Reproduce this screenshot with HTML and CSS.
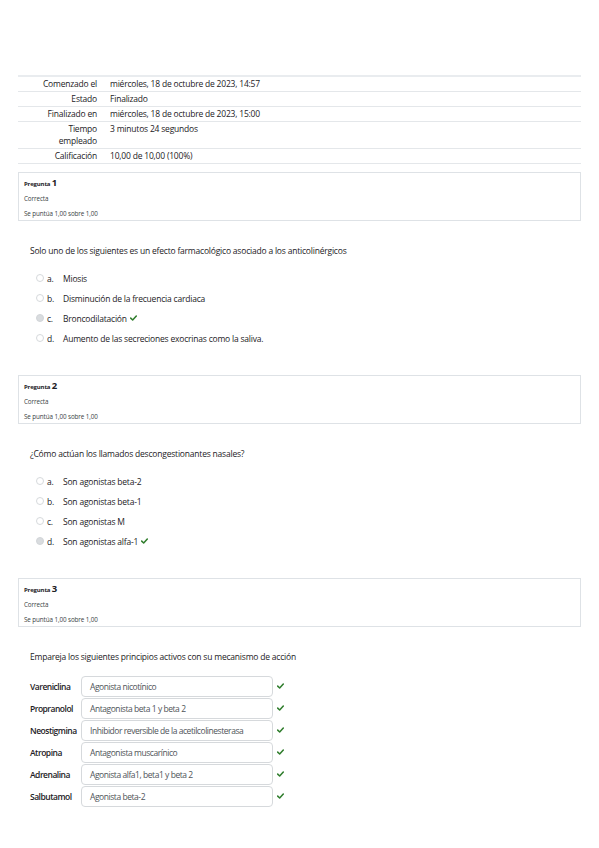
FILE: index.html
```html
<!DOCTYPE html>
<html lang="es">
<head>
<meta charset="utf-8">
<link rel="stylesheet" href="styles.css">
</head>
<body>
<div class="page">
  <table class="summary">
    <tr><th>Comenzado el</th><td>miércoles, 18 de octubre de 2023, 14:57</td></tr>
    <tr><th>Estado</th><td>Finalizado</td></tr>
    <tr><th>Finalizado en</th><td>miércoles, 18 de octubre de 2023, 15:00</td></tr>
    <tr class="tall"><th>Tiempo<br>empleado</th><td>3 minutos 24 segundos</td></tr>
    <tr><th>Calificación</th><td>10,00 de 10,00 (100%)</td></tr>
  </table>

  <div class="info">
    <div class="qno">Pregunta <span>1</span></div>
    <div class="state">Correcta</div>
    <div class="grade">Se puntúa 1,00 sobre 1,00</div>
  </div>
  <div class="content">
    <p class="qtext">Solo uno de los siguientes es un efecto farmacológico asociado a los anticolinérgicos</p>
    <ul class="answers">
      <li><span class="radio"></span><span class="let">a.</span>Miosis</li>
      <li><span class="radio"></span><span class="let">b.</span>Disminución de la frecuencia cardiaca</li>
      <li><span class="radio on"></span><span class="let">c.</span>Broncodilatación <svg class="chk" viewBox="0 0 10 8"><path d="M1 4.2 L3.8 6.8 L9 1.2" /></svg></li>
      <li><span class="radio"></span><span class="let">d.</span>Aumento de las secreciones exocrinas como la saliva.</li>
    </ul>
  </div>

  <div class="info">
    <div class="qno">Pregunta <span>2</span></div>
    <div class="state">Correcta</div>
    <div class="grade">Se puntúa 1,00 sobre 1,00</div>
  </div>
  <div class="content">
    <p class="qtext">¿Cómo actúan los llamados descongestionantes nasales?</p>
    <ul class="answers">
      <li><span class="radio"></span><span class="let">a.</span>Son agonistas beta-2</li>
      <li><span class="radio"></span><span class="let">b.</span>Son agonistas beta-1</li>
      <li><span class="radio"></span><span class="let">c.</span>Son agonistas M</li>
      <li><span class="radio on"></span><span class="let">d.</span>Son agonistas alfa-1 <svg class="chk" viewBox="0 0 10 8"><path d="M1 4.2 L3.8 6.8 L9 1.2" /></svg></li>
    </ul>
  </div>

  <div class="info">
    <div class="qno">Pregunta <span>3</span></div>
    <div class="state">Correcta</div>
    <div class="grade">Se puntúa 1,00 sobre 1,00</div>
  </div>
  <div class="content">
    <p class="qtext">Empareja los siguientes principios activos con su mecanismo de acción</p>
    <div class="match">
      <div class="mrow"><span class="mlabel">Vareniclina</span><span class="sel">Agonista nicotínico</span><svg class="chk" viewBox="0 0 10 8"><path d="M1 4.2 L3.8 6.8 L9 1.2" /></svg></div>
      <div class="mrow"><span class="mlabel">Propranolol</span><span class="sel">Antagonista beta 1 y beta 2</span><svg class="chk" viewBox="0 0 10 8"><path d="M1 4.2 L3.8 6.8 L9 1.2" /></svg></div>
      <div class="mrow"><span class="mlabel">Neostigmina</span><span class="sel">Inhibidor reversible de la acetilcolinesterasa</span><svg class="chk" viewBox="0 0 10 8"><path d="M1 4.2 L3.8 6.8 L9 1.2" /></svg></div>
      <div class="mrow"><span class="mlabel">Atropina</span><span class="sel">Antagonista muscarínico</span><svg class="chk" viewBox="0 0 10 8"><path d="M1 4.2 L3.8 6.8 L9 1.2" /></svg></div>
      <div class="mrow"><span class="mlabel">Adrenalina</span><span class="sel">Agonista alfa1, beta1 y beta 2</span><svg class="chk" viewBox="0 0 10 8"><path d="M1 4.2 L3.8 6.8 L9 1.2" /></svg></div>
      <div class="mrow"><span class="mlabel">Salbutamol</span><span class="sel">Agonista beta-2</span><svg class="chk" viewBox="0 0 10 8"><path d="M1 4.2 L3.8 6.8 L9 1.2" /></svg></div>
    </div>
  </div>
</div>
</body>
</html>
```

FILE: styles.css
```css
html, body {
  margin: 0;
  padding: 0;
  background: #fff;
}
body {
  font-family: "Open Sans", "Noto Sans", sans-serif;
  color: #1d2125;
  font-size: 8.5px;
  letter-spacing: -0.2px;
}
.page {
  padding: 75px 18px 0 18px;
}
.summary {
  width: 100%;
  border-collapse: collapse;
  border-top: 2px solid #e9ecef;
}
.summary tr {
  border-bottom: 1px solid #e4e7ea;
}
.summary th {
  width: 79px;
  text-align: right;
  font-weight: normal;
  padding: 1px 6px 1px 0;
  line-height: 12px;
  height: 12px;
  vertical-align: top;
}
.summary td {
  padding: 1px 0 1px 7px;
  line-height: 12px;
  vertical-align: top;
}
.info {
  margin-top: 8px;
  border: 1px solid #dee2e6;
  height: 47px;
  padding: 0 5px;
  box-sizing: content-box;
}
.qno {
  font-size: 6px;
  font-weight: bold;
  letter-spacing: -0.15px;
  line-height: 9px;
  margin-top: 5px;
}
.qno span {
  font-size: 9.5px;
}
.state, .grade {
  font-size: 6.3px;
  letter-spacing: -0.1px;
  color: #3a3f44;
  line-height: 8px;
}
.state {
  margin-top: 6px;
}
.grade {
  margin-top: 7px;
}
.content {
  padding: 0 12px;
}
.qtext {
  margin: 23px 0 0 0;
  line-height: 14px;
}
.answers {
  list-style: none;
  margin: 10px 0 0 0;
  padding: 0 0 0 6px;
}
.answers li {
  display: flex;
  align-items: center;
  height: 20px;
}
.radio {
  width: 6px;
  height: 6px;
  border: 1px solid #d6d9dc;
  border-radius: 50%;
  margin-right: 3px;
  box-sizing: content-box;
}
.radio.on {
  background: #d9dcdf;
  border-color: #d2d5d8;
}
.let {
  width: 16px;
}
.chk {
  width: 7px;
  height: 6px;
  margin-left: 3px;
}
.chk path {
  fill: none;
  stroke: #2f7d2c;
  stroke-width: 2.2;
  stroke-linecap: round;
  stroke-linejoin: round;
}
.content:not(:last-child) {
  margin-bottom: 27px;
}
.match {
  margin-top: 11px;
}
.mrow {
  display: flex;
  align-items: center;
  height: 22px;
}
.mlabel {
  width: 51px;
  font-weight: 600;
  letter-spacing: -0.5px;
}
.sel {
  width: 182px;
  height: 19px;
  border: 1px solid #d6d9dc;
  border-radius: 4px;
  padding-left: 8px;
  display: flex;
  align-items: center;
  color: #4f5459;
  letter-spacing: -0.45px;
  box-sizing: content-box;
}
.mrow .chk {
  margin-left: 4px;
}
```
